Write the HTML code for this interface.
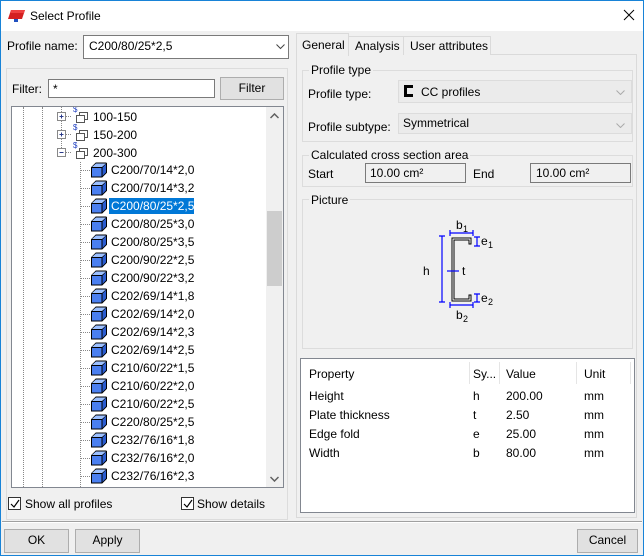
<!DOCTYPE html>
<html><head><meta charset="utf-8"><style>
*{box-sizing:border-box;margin:0;padding:0}
body{width:644px;height:556px;background:#f0f0f0;font-family:"Liberation Sans",sans-serif;font-size:12px;color:#000;position:relative;overflow:hidden}
.a{position:absolute}
.t{position:absolute;white-space:nowrap;line-height:14px}
.btn{position:absolute;background:#e1e1e1;border:1px solid #adadad;text-align:center;line-height:20px}
.grp{position:absolute;border:1px solid #dcdcdc}
.lbl{position:absolute;background:#f0f0f0;padding:0 2px;line-height:14px;white-space:nowrap}
.vd{position:absolute;width:1px;border-left:1px dotted #888}
.cb{position:absolute;width:13px;height:13px;border:1px solid #333;background:#fff}
</style></head><body>
<div class="a" style="left:0;top:0;width:644px;height:556px;border:1px solid #1883d7"></div>
<div class="a" style="left:1px;top:1px;width:642px;height:30px;background:#fff"></div>
<svg class="a" style="left:8px;top:8px" width="20" height="16"><polygon points="3,2 17,2 14,11 0,11" fill="#d42020"/><polygon points="3,2 17,2 16,5 2,5" fill="#ee4040"/><rect x="6" y="11" width="4" height="3" fill="#2050c0"/></svg>
<div class="t" style="left:30px;top:9px;font-size:12px">Select Profile</div>
<svg class="a" style="left:623px;top:9px" width="12" height="12"><path d="M1 1L11 11M11 1L1 11" stroke="#000" stroke-width="1"/></svg>

<div class="t" style="left:7px;top:39px">Profile name:</div>
<div class="a" style="left:83px;top:35px;width:206px;height:24px;background:#fff;border:1px solid #7a7a7a"></div>
<div class="t" style="left:89px;top:39px">C200/80/25*2,5</div>
<svg class="a" style="left:276px;top:44px" width="10" height="6"><path d="M0.5 0.5L4.5 4.5L8.5 0.5" stroke="#444" fill="none"/></svg>

<div class="grp" style="left:6px;top:68px;width:282px;height:452px"></div>
<div class="t" style="left:12px;top:82px">Filter:</div>
<div class="a" style="left:48px;top:79px;width:167px;height:19px;background:#fff;border:1px solid #7a7a7a"></div>
<div class="t" style="left:53px;top:82px">*</div>
<div class="btn" style="left:220px;top:77px;width:64px;height:23px;line-height:21px;background:#e1e1e1">Filter</div>

<div class="a" style="left:11px;top:106px;width:273px;height:382px;background:#fff;border:1px solid #828790;overflow:hidden">
<div class="vd" style="left:11px;top:0;height:380px"></div>
<div class="vd" style="left:30px;top:0;height:380px"></div>
<div class="vd" style="left:49px;top:0;height:45px"></div>
<div class="vd" style="left:68px;top:55px;height:325px"></div>
</div>
<div class="a" style="left:266px;top:107px;width:17px;height:380px;background:#f0f0f0"></div>
<div class="a" style="left:267px;top:211px;width:15px;height:75px;background:#cdcdcd"></div>
<svg class="a" style="left:270px;top:113px" width="9" height="6"><path d="M0.5 5L4.5 1L8.5 5" stroke="#606060" stroke-width="1.5" fill="none"/></svg>
<svg class="a" style="left:270px;top:476px" width="9" height="6"><path d="M0.5 1L4.5 5L8.5 1" stroke="#606060" stroke-width="1.5" fill="none"/></svg>

<div class="cb" style="left:8px;top:497px"></div>
<svg class="a" style="left:9px;top:498px" width="12" height="12"><path d="M2 6L5 9L10 2" stroke="#000" fill="none" stroke-width="1.2"/></svg>
<div class="t" style="left:25px;top:497px">Show all profiles</div>
<div class="cb" style="left:181px;top:497px"></div>
<svg class="a" style="left:182px;top:498px" width="12" height="12"><path d="M2 6L5 9L10 2" stroke="#000" fill="none" stroke-width="1.2"/></svg>
<div class="t" style="left:197px;top:497px">Show details</div>

<div class="a" style="left:296px;top:54px;width:341px;height:464px;border:1px solid #dadada;background:#f0f0f0"></div>
<div class="a" style="left:348px;top:36px;width:56px;height:19px;border:1px solid #dadada;border-bottom:none;background:#f0f0f0"></div>
<div class="a" style="left:403px;top:36px;width:88px;height:19px;border:1px solid #dadada;border-bottom:none;background:#f0f0f0"></div>
<div class="a" style="left:296px;top:33px;width:53px;height:23px;border:1px solid #dadada;border-bottom:none;background:#f0f0f0"></div>
<div class="t" style="left:302px;top:38px">General</div>
<div class="t" style="left:355px;top:39px">Analysis</div>
<div class="t" style="left:410px;top:39px">User attributes</div>

<div class="grp" style="left:302px;top:70px;width:331px;height:72px"></div>
<div class="lbl" style="left:309px;top:63px">Profile type</div>
<div class="t" style="left:308px;top:87px">Profile type:</div>
<div class="a" style="left:398px;top:80px;width:234px;height:23px;border:1px solid #dcdcdc;background:#ebebeb"></div>
<svg class="a" style="left:404px;top:85px" width="10" height="12"><path d="M9 1.5H1.5V10.5H9" stroke="#000" stroke-width="3" fill="none"/></svg>
<div class="t" style="left:421px;top:85px">CC profiles</div>
<svg class="a" style="left:616px;top:90px" width="9" height="5"><path d="M0.5 0.5L4.5 4.5L8.5 0.5" stroke="#aaa" fill="none"/></svg>
<div class="t" style="left:308px;top:120px">Profile subtype:</div>
<div class="a" style="left:398px;top:113px;width:234px;height:21px;border:1px solid #dcdcdc;background:#ebebeb"></div>
<div class="t" style="left:403px;top:116px">Symmetrical</div>
<svg class="a" style="left:616px;top:123px" width="9" height="5"><path d="M0.5 0.5L4.5 4.5L8.5 0.5" stroke="#aaa" fill="none"/></svg>

<div class="grp" style="left:302px;top:155px;width:331px;height:32px"></div>
<div class="lbl" style="left:309px;top:148px">Calculated cross section area</div>
<div class="t" style="left:308px;top:167px">Start</div>
<div class="a" style="left:365px;top:163px;width:101px;height:20px;border:1px solid #7a7a7a;background:#f0f0f0"></div>
<div class="t" style="left:370px;top:166px">10.00 cm²</div>
<div class="t" style="left:473px;top:167px">End</div>
<div class="a" style="left:530px;top:163px;width:101px;height:20px;border:1px solid #7a7a7a;background:#f0f0f0"></div>
<div class="t" style="left:536px;top:166px">10.00 cm²</div>

<div class="grp" style="left:302px;top:199px;width:331px;height:150px"></div>
<div class="lbl" style="left:309px;top:193px">Picture</div>
<svg class="a" style="left:420px;top:215px" width="90" height="110" font-family="Liberation Sans" font-size="12">
<path d="M51 23H32V86H51V80H49V84H34V25H49V29H51Z" fill="#fff" stroke="#000" stroke-width="1"/>
<g stroke="#0000ff" stroke-width="1.2" fill="none">
<path d="M22 21V87M19 21H25M19 87H25"/>
<path d="M30 18H53M30 15V21M53 15V21"/>
<path d="M30 90H53M30 87V93M53 87V93"/>
<path d="M57 22V31M54 22H60M54 31H60"/>
<path d="M57 79V87M54 79H60M54 87H60"/>
<path d="M27 56H39"/>
</g>
<text x="3" y="60">h</text><text x="42" y="60">t</text>
<text x="36" y="14">b</text><text x="43" y="17" font-size="9">1</text>
<text x="36" y="104">b</text><text x="43" y="107" font-size="9">2</text>
<text x="61" y="30">e</text><text x="68" y="33" font-size="9">1</text>
<text x="61" y="87">e</text><text x="68" y="90" font-size="9">2</text>
</svg>

<div class="a" style="left:300px;top:358px;width:335px;height:155px;border:1px solid #828790;background:#fff"></div>
<div class="a" style="left:469px;top:362px;width:1px;height:22px;background:#e5e5e5"></div>
<div class="a" style="left:499px;top:362px;width:1px;height:22px;background:#e5e5e5"></div>
<div class="a" style="left:576px;top:362px;width:1px;height:22px;background:#e5e5e5"></div>
<div class="a" style="left:630px;top:362px;width:1px;height:22px;background:#e5e5e5"></div>
<div class="t" style="left:309px;top:367px">Property</div><div class="t" style="left:473px;top:367px">Sy...</div><div class="t" style="left:506px;top:367px">Value</div><div class="t" style="left:584px;top:367px">Unit</div>
<div class="t" style="left:309px;top:389px">Height</div><div class="t" style="left:473px;top:389px">h</div><div class="t" style="left:506px;top:389px">200.00</div><div class="t" style="left:584px;top:389px">mm</div>
<div class="t" style="left:309px;top:408px">Plate thickness</div><div class="t" style="left:473px;top:408px">t</div><div class="t" style="left:506px;top:408px">2.50</div><div class="t" style="left:584px;top:408px">mm</div>
<div class="t" style="left:309px;top:427px">Edge fold</div><div class="t" style="left:473px;top:427px">e</div><div class="t" style="left:506px;top:427px">25.00</div><div class="t" style="left:584px;top:427px">mm</div>
<div class="t" style="left:309px;top:446px">Width</div><div class="t" style="left:473px;top:446px">b</div><div class="t" style="left:506px;top:446px">80.00</div><div class="t" style="left:584px;top:446px">mm</div>

<div class="a" style="left:2px;top:521px;width:640px;height:1px;background:#a0a0a0"></div>
<div class="a" style="left:2px;top:522px;width:640px;height:1px;background:#fff"></div>
<div class="btn" style="left:4px;top:529px;width:65px;height:24px">OK</div>
<div class="btn" style="left:75px;top:529px;width:65px;height:24px">Apply</div>
<div class="btn" style="left:577px;top:529px;width:61px;height:24px">Cancel</div>

<div class="a" style="left:12px;top:107px;width:254px;height:380px;overflow:hidden">
<svg width="254" height="380" font-family="Liberation Sans" font-size="12">
<defs>
<g id="bx"><path d="M0.5 5.5L5 1H15L15.5 1.5V10.5L11 15H0.5Z" fill="#4a7ff0" stroke="#000"/><path d="M0.5 5.5H11V15M11 5.5L15.5 1" stroke="#000" fill="none"/><path d="M1 5L5 1.5H15L11 5Z" fill="#9cc0ff"/><path d="M11.5 6L15 2V10L11.5 14Z" fill="#2a5cd0"/></g>
<g id="gp"><rect x="4.5" y="1.5" width="8" height="7" fill="#fff" stroke="#555"/><rect x="1.5" y="4.5" width="8" height="7" fill="#fff" stroke="#555"/><text x="-2" y="1" font-size="8" fill="#2040c0">$</text></g>
</defs>
<g>
<rect x="45.5" y="5.5" width="8" height="8" fill="#fff" stroke="#888"/><path d="M47.5 9.5H51.5M49.5 7.5V11.5" stroke="#2a3a8a"/><path d="M54 9.5H60" stroke="#888" stroke-dasharray="1,1"/><use href="#gp" x="63" y="4"/><text x="81" y="14">100-150</text>
<rect x="45.5" y="23.5" width="8" height="8" fill="#fff" stroke="#888"/><path d="M47.5 27.5H51.5M49.5 25.5V29.5" stroke="#2a3a8a"/><path d="M54 27.5H60" stroke="#888" stroke-dasharray="1,1"/><use href="#gp" x="63" y="22"/><text x="81" y="32">150-200</text>
<rect x="45.5" y="41.5" width="8" height="8" fill="#fff" stroke="#888"/><path d="M47.5 45.5H51.5" stroke="#2a3a8a"/><path d="M54 45.5H60" stroke="#888" stroke-dasharray="1,1"/><use href="#gp" x="63" y="40"/><text x="81" y="50">200-300</text>
</g>
<g id="leaves"></g>
</svg>
</div>
<script>
var n=["C200/70/14*2,0","C200/70/14*3,2","C200/80/25*2,5","C200/80/25*3,0","C200/80/25*3,5","C200/90/22*2,5","C200/90/22*3,2","C202/69/14*1,8","C202/69/14*2,0","C202/69/14*2,3","C202/69/14*2,5","C210/60/22*1,5","C210/60/22*2,0","C210/60/22*2,5","C220/80/25*2,5","C232/76/16*1,8","C232/76/16*2,0","C232/76/16*2,3"];
var g=document.getElementById('leaves'),s='';
n.forEach(function(t,i){var y=54+18*i;
s+='<path d="M69 '+(y+9.5)+'H78" stroke="#888" stroke-dasharray="1,1"/><use href="#bx" x="79" y="'+(y+1)+'"/>';
if(i==2)s+='<rect x="97" y="'+(y+1)+'" width="85" height="16" fill="#0078d7"/>';
s+='<text x="99" y="'+(y+13)+'" fill="'+(i==2?'#fff':'#000')+'">'+t+'</text>';});
g.innerHTML=s;
</script>
</body></html>
